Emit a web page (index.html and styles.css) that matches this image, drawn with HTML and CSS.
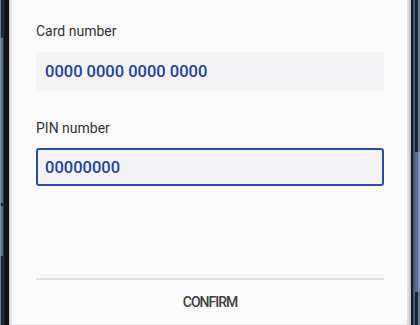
FILE: index.html
```html
<!DOCTYPE html>
<html>
<head>
<meta charset="utf-8">
<link rel="stylesheet" href="styles.css">
</head>
<body>
<div class="phone">
  <div class="bezel bezel-left">
    <div class="seg seg-top"></div>
    <div class="seg seg-btn seg-btn1"></div>
    <div class="seg seg-gap"></div>
    <div class="seg seg-btn seg-btn2"></div>
    <div class="seg seg-rest"></div>
  </div>
  <div class="screen">
    <div class="form">
      <div class="label">Card number</div>
      <div class="field">0000 0000 0000 0000</div>
      <div class="label label-pin">PIN number</div>
      <div class="field field-active">00000000</div>
    </div>
    <div class="spacer"></div>
    <div class="footer">
      <div class="divider"></div>
      <div class="confirm">CONFIRM</div>
    </div>
  </div>
  <div class="bezel bezel-right">
    <div class="seg rseg-top"></div>
    <div class="seg rseg-btn"></div>
    <div class="seg rseg-rest"></div>
  </div>
</div>
</body>
</html>
```

FILE: styles.css
```css
html, body {
  margin: 0;
  padding: 0;
  background: #fafafa;
}
body {
  width: 420px;
  height: 325px;
  overflow: hidden;
  font-family: Roboto, "Liberation Sans", sans-serif;
}
.phone {
  display: flex;
  height: 325px;
}
.bezel {
  display: flex;
  flex-direction: column;
}
.bezel-left {
  width: 12px;
}
.bezel-left .seg {
  background: linear-gradient(to right,
    #6f7d96 0, #6f7d96 1px,
    #1b2337 1px, #1b2337 3px,
    #2a3550 3px, #2a3550 4px,
    #121418 4px, #121418 9px,
    #c4c5ca 9px, #c4c5ca 10px,
    #e3e3e6 10px, #e3e3e6 12px);
}
.bezel-left .seg-top { height: 38px; }
.bezel-left .seg-btn {
  background: linear-gradient(to right,
    #8090b0 0, #8090b0 1px,
    #5a6d99 1px, #5a6d99 3px,
    #2a3550 3px, #2a3550 4px,
    #121418 4px, #121418 9px,
    #c4c5ca 9px, #c4c5ca 10px,
    #e3e3e6 10px, #e3e3e6 12px);
}
.bezel-left .seg-btn1 { height: 165px; }
.bezel-left .seg-gap { height: 3px; }
.bezel-left .seg-btn2 { height: 50px; }
.bezel-left .seg-rest { flex: 1; }

.bezel-right {
  width: 13px;
}
.bezel-right .seg {
  background: linear-gradient(to right,
    #e0e0e3 0, #e0e0e3 2px,
    #c6c7cc 2px, #c6c7cc 4px,
    #16181d 4px, #16181d 6px,
    #4a5a7e 6px, #4a5a7e 8px,
    #1c2333 8px, #1c2333 11px,
    #6f7d96 11px, #6f7d96 13px);
}
.bezel-right .rseg-top { height: 152px; }
.bezel-right .rseg-btn {
  height: 140px;
  background: linear-gradient(to right,
    #e0e0e3 0, #e0e0e3 2px,
    #c6c7cc 2px, #c6c7cc 4px,
    #16181d 4px, #16181d 6px,
    #4a5a7e 6px, #4a5a7e 8px,
    #5a6d99 8px, #5a6d99 11px,
    #8090b0 11px, #8090b0 13px);
}
.bezel-right .rseg-rest { flex: 1; }

.screen {
  flex: 1;
  display: flex;
  flex-direction: column;
  background: #fafafa;
  padding: 0 23px 0 24px;
  border-bottom: 1px solid #ececee;
  box-sizing: border-box;
}
.form {
  display: flex;
  flex-direction: column;
  padding-top: 21px;
}
.label {
  font-size: 14px;
  line-height: 20px;
  color: #333333;
}
.label-pin {
  margin-top: 27px;
}
.field {
  margin-top: 11px;
  height: 39px;
  box-sizing: border-box;
  display: flex;
  align-items: center;
  padding-left: 9px;
  background: #f3f3f5;
  border-radius: 3px;
  font-size: 16.5px;
  font-weight: 500;
  color: #2242a0;
}
.field-active {
  margin-top: 10px;
  height: 38px;
  padding-left: 7px;
  border: 2px solid #2c4ca3;
}
.spacer {
  flex: 1;
}
.footer {
  display: flex;
  flex-direction: column;
  padding-bottom: 12px;
}
.divider {
  height: 2px;
  background: #e2e2e2;
}
.confirm {
  margin-top: 12px;
  text-align: center;
  font-size: 14px;
  line-height: 20px;
  font-weight: 500;
  letter-spacing: -1px;
  color: #404040;
}
```
